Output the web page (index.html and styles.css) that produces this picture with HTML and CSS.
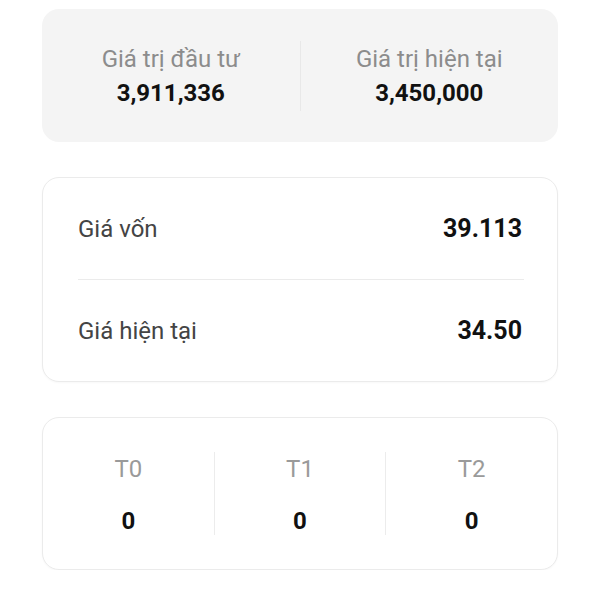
FILE: index.html
```html
<!DOCTYPE html>
<html lang="vi">
<head>
<meta charset="utf-8">
<title>Portfolio</title>
<link rel="stylesheet" href="styles.css">
</head>
<body>
<main class="page">
  <section class="card summary">
    <div class="summary-col">
      <div class="summary-label">Giá trị đầu tư</div>
      <div class="summary-value">3,911,336</div>
    </div>
    <div class="vdiv summary-div"></div>
    <div class="summary-col">
      <div class="summary-label">Giá trị hiện tại</div>
      <div class="summary-value">3,450,000</div>
    </div>
  </section>

  <section class="card prices">
    <div class="price-row">
      <span class="price-label">Giá vốn</span>
      <span class="price-value">39.113</span>
    </div>
    <div class="hdiv"></div>
    <div class="price-row">
      <span class="price-label">Giá hiện tại</span>
      <span class="price-value">34.50</span>
    </div>
  </section>

  <section class="card settle">
    <div class="settle-col">
      <div class="settle-label">T0</div>
      <div class="settle-value">0</div>
    </div>
    <div class="vdiv settle-div"></div>
    <div class="settle-col">
      <div class="settle-label">T1</div>
      <div class="settle-value">0</div>
    </div>
    <div class="vdiv settle-div"></div>
    <div class="settle-col">
      <div class="settle-label">T2</div>
      <div class="settle-value">0</div>
    </div>
  </section>
</main>
</body>
</html>
```

FILE: styles.css
```css
* { box-sizing: border-box; }

html, body {
  margin: 0;
  padding: 0;
  background: #ffffff;
}

body {
  font-family: Roboto, "Noto Sans", "Liberation Sans", sans-serif;
  color: #111111;
}

.page {
  width: 600px;
  padding: 9px 42px 0 42px;
  display: flex;
  flex-direction: column;
  gap: 35px;
}

.card {
  width: 516px;
  border-radius: 17px;
}

/* Summary card */
.summary {
  height: 133px;
  background: #f4f4f4;
  display: flex;
  align-items: center;
}

.summary-col {
  flex: 1;
  display: flex;
  flex-direction: column;
  align-items: center;
  gap: 4px;
  padding-top: 1px;
}

.summary-label {
  font-size: 24px;
  line-height: 30px;
  color: #8c8c8c;
}

.summary-value {
  font-size: 24px;
  line-height: 30px;
  font-weight: 700;
  color: #111111;
}

.vdiv {
  width: 1px;
  flex: none;
  background: #e6e6e6;
}

.summary-div {
  height: 70px;
  background: #e8e8e8;
}

/* Prices card */
.prices {
  background: #ffffff;
  border: 1px solid #ebebeb;
  box-shadow: 0 1px 2px rgba(0, 0, 0, 0.03);
  padding: 0 35px;
  display: flex;
  flex-direction: column;
}

.price-row {
  height: 101px;
  display: flex;
  align-items: center;
  justify-content: space-between;
}

.price-label {
  font-size: 24px;
  color: #444444;
}

.price-value {
  font-size: 25px;
  font-weight: 700;
  color: #111111;
}

.hdiv {
  height: 1px;
  background: #ebebeb;
  margin-right: -2px;
}

/* Settlement card */
.settle {
  height: 153px;
  background: #ffffff;
  border: 1px solid #ebebeb;
  box-shadow: 0 1px 2px rgba(0, 0, 0, 0.03);
  display: flex;
  align-items: center;
}

.settle-col {
  flex: 1;
  display: flex;
  flex-direction: column;
  align-items: center;
  gap: 22px;
  padding-top: 3px;
}

.settle-label {
  font-size: 24px;
  line-height: 30px;
  color: #9a9a9a;
}

.settle-value {
  font-size: 24px;
  line-height: 30px;
  font-weight: 700;
  color: #111111;
}

.settle-div {
  height: 83px;
  background: #ececec;
}
```
